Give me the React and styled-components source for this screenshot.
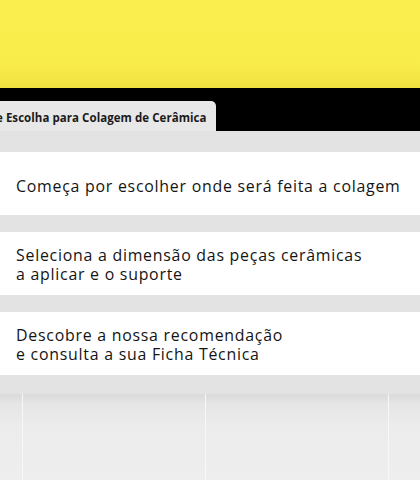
import React from "react";
import styled, { createGlobalStyle } from "styled-components";

const Global = createGlobalStyle`
  html, body { margin: 0; padding: 0; background: #e3e3e3; }
  body { width: 420px; height: 480px; overflow: hidden; font-family: "Open Sans", "Liberation Sans", sans-serif; }
`;

const Page = styled.div`
  width: 420px;
  height: 480px;
  display: flex;
  flex-direction: column;
  background: #e3e3e3;
`;

const Banner = styled.div`
  height: 88px;
  background: linear-gradient(180deg, #f9ee4e 0%, #f8ec4a 75%, #efe140 100%);
`;

const TabBar = styled.div`
  height: 43px;
  background: #000;
  display: flex;
  align-items: flex-end;
`;

const Tab = styled.div`
  width: 216px;
  height: 30px;
  background: #e8e8e8;
  border-top-right-radius: 5px;
  display: flex;
  align-items: center;
  font-size: 11.5px;
  font-weight: 700;
  color: #1b1b1b;
  white-space: nowrap;
  overflow: hidden;
`;

const TabText = styled.span`
  margin-left: -4px;
  margin-top: 2px;
  letter-spacing: 0.05px;
`;

const Steps = styled.div`
  display: flex;
  flex-direction: column;
  gap: 17px;
  padding-top: 21px;
`;

const Card = styled.div`
  height: 63px;
  box-sizing: border-box;
  background: #fff;
  display: flex;
  align-items: center;
  padding: ${(p) => (p.$single ? "5px" : "2px")} 16px 0;
  font-size: 15.9px;
  font-weight: 500;
  line-height: 19px;
  color: #141414;
  letter-spacing: 0.75px;
`;

const Tiles = styled.div`
  margin-top: 19px;
  flex: 1;
  display: grid;
  grid-template-columns: 22px 182px 182px 1fr;
  gap: 1px;
  background: #f7f7f7;
`;

const Tile = styled.div`
  background: linear-gradient(180deg, #dadada 0%, #e6e6e6 12%, #ececec 40%, #eeeeee 100%);
`;

const steps = [
  ["Começa por escolher onde será feita a colagem"],
  ["Seleciona a dimensão das peças cerâmicas", "a aplicar e o suporte"],
  ["Descobre a nossa recomendação", "e consulta a sua Ficha Técnica"],
];

export default function App() {
  return (
    <Page>
      <Global />
      <Banner />
      <TabBar>
        <Tab>
          <TabText>e Escolha para Colagem de Cerâmica</TabText>
        </Tab>
      </TabBar>
      <Steps>
        {steps.map((lines, i) => (
          <Card key={i} $single={lines.length === 1}>
            <div>
              {lines.map((l, j) => (
                <div key={j}>{l}</div>
              ))}
            </div>
          </Card>
        ))}
      </Steps>
      <Tiles>
        <Tile />
        <Tile />
        <Tile />
        <Tile />
      </Tiles>
    </Page>
  );
}
